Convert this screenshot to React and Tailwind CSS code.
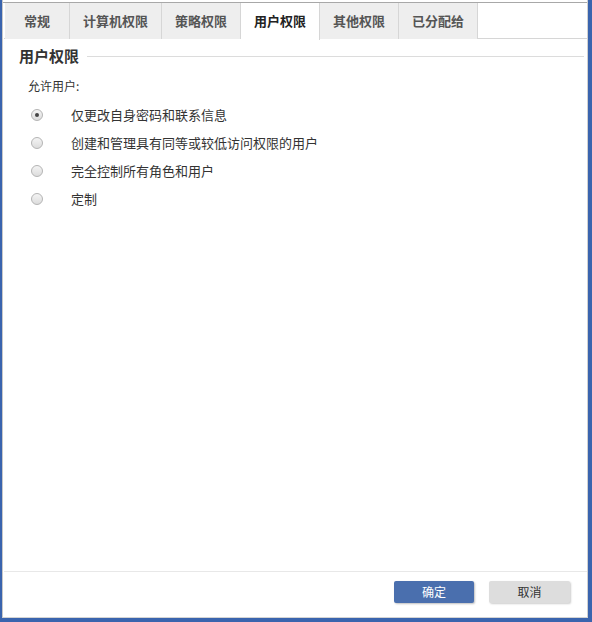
import React from "react";

const font = { fontFamily: '"Noto Sans CJK SC", "Noto Sans", sans-serif' };

function Radio({ checked }) {
  return (
    <span className="relative inline-block w-[12px] h-[12px] rounded-full border border-[#b4b4b4] bg-gradient-to-b from-[#f4f4f4] to-[#dcdcdc]">
      {checked && (
        <span className="absolute left-[3px] top-[3px] w-[4px] h-[4px] rounded-full bg-[#444]" />
      )}
    </span>
  );
}

export default function App() {
  const tabs = [
    { label: "常规", w: "w-[65px]" },
    { label: "计算机权限", w: "w-[92px]" },
    { label: "策略权限", w: "w-[79px]" },
    { label: "用户权限", w: "w-[79px]", active: true },
    { label: "其他权限", w: "w-[79px]" },
    { label: "已分配给", w: "w-[79px]" },
  ];
  const opts = [
    "仅更改自身密码和联系信息",
    "创建和管理具有同等或较低访问权限的用户",
    "完全控制所有角色和用户",
    "定制",
  ];
  return (
    <div
      className="w-[592px] h-[622px] bg-[#3a64ae] pl-[2px] pr-[4px] pb-[4px] flex flex-col"
      style={font}
    >
      <div className="flex-1 flex flex-col bg-white border-l border-[#c8c8c8] border-r border-r-[#d0d0d0] border-b border-b-[#d4d4d4] pt-[2px]">
        <div className="flex-1 flex flex-col border-t border-[#a8a8a8] pl-[1px]">
          {/* tabs */}
          <div className="flex h-[36px] border-b border-[#d6d6d6] pl-[1px]">
            {tabs.map((t) => (
              <div
                key={t.label}
                className={`${t.w} flex items-center justify-center border-r border-[#d6d6d6] text-[13px] font-bold pb-[1px] ${
                  t.active
                    ? "bg-white text-[#222] h-[37px] -mb-[1px]"
                    : "bg-[#eeeeee] text-[#555] h-[36px]"
                }`}
              >
                {t.label}
              </div>
            ))}
          </div>
          {/* section header */}
          <div className="flex items-center pl-[15px] pr-[3px] mt-[7px]">
            <span className="text-[15px] font-bold text-[#333] leading-[20px]">用户权限</span>
            <div className="flex-1 h-px bg-[#dcdcdc] ml-[8px]" />
          </div>
          <div className="pl-[24px] mt-[12px] text-[12px] text-[#333] leading-[16px]">允许用户:</div>
          <div className="flex flex-col pl-[27px] mt-[12px] gap-[11px]">
            {opts.map((o, i) => (
              <div key={o} className="flex items-center h-[17px]">
                <Radio checked={i === 0} />
                <span className="ml-[28px] text-[13px] text-[#333]">{o}</span>
              </div>
            ))}
          </div>
          <div className="flex-1" />
          {/* footer */}
          <div className="border-t border-[#e8e8e8] h-[46px] flex items-start justify-end pt-[9px] pr-[17px] gap-[15px]">
            <button className="w-[80px] h-[22px] rounded-[2px] bg-[#4a6fae] text-white text-[12px] shadow-[1px_1px_2px_rgba(0,0,0,0.25)]">
              确定
            </button>
            <button className="w-[81px] h-[22px] rounded-[2px] bg-[#dddddd] text-[#333] text-[12px] shadow-[1px_1px_2px_rgba(0,0,0,0.2)]">
              取消
            </button>
          </div>
        </div>
      </div>
    </div>
  );
}
